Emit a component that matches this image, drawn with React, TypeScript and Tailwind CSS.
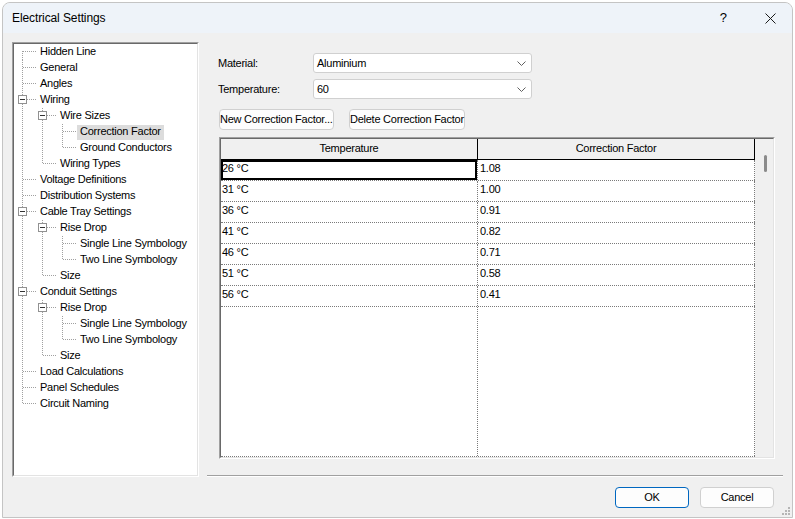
import type { ReactNode } from 'react'

type Node = { t: string; c?: Node[]; sel?: boolean }
type Row = { t: string; guides: boolean[]; first: boolean; last: boolean; kids: boolean; sel?: boolean }

const riseDrop = (): Node[] => [
  { t: 'Rise Drop', c: [{ t: 'Single Line Symbology' }, { t: 'Two Line Symbology' }] },
  { t: 'Size' },
]

const tree: Node[] = [
  { t: 'Hidden Line' },
  { t: 'General' },
  { t: 'Angles' },
  {
    t: 'Wiring',
    c: [
      { t: 'Wire Sizes', c: [{ t: 'Correction Factor', sel: true }, { t: 'Ground Conductors' }] },
      { t: 'Wiring Types' },
    ],
  },
  { t: 'Voltage Definitions' },
  { t: 'Distribution Systems' },
  { t: 'Cable Tray Settings', c: riseDrop() },
  { t: 'Conduit Settings', c: riseDrop() },
  { t: 'Load Calculations' },
  { t: 'Panel Schedules' },
  { t: 'Circuit Naming' },
]

function flatten(nodes: Node[], guides: boolean[] = [], out: Row[] = []) {
  nodes.forEach((n, i) => {
    const last = i === nodes.length - 1
    out.push({ t: n.t, guides, first: guides.length === 0 && i === 0, last, kids: !!n.c, sel: n.sel })
    if (n.c) flatten(n.c, [...guides, !last], out)
  })
  return out
}

const rows = flatten(tree)

const factors = [
  ['26 °C', '1.08'],
  ['31 °C', '1.00'],
  ['36 °C', '0.91'],
  ['41 °C', '0.82'],
  ['46 °C', '0.71'],
  ['51 °C', '0.58'],
  ['56 °C', '0.41'],
]

const dot = '#a0a0a0'

function Guide({ on }: { on: boolean }) {
  return (
    <svg width="20" height="16" shapeRendering="crispEdges" className="shrink-0">
      {on && <line x1="8.5" y1="0" x2="8.5" y2="16" stroke={dot} strokeDasharray="1 1" />}
    </svg>
  )
}

function Connector({ row }: { row: Row }) {
  return (
    <svg width="23" height="16" shapeRendering="crispEdges" className="shrink-0">
      <line
        x1="8.5"
        y1={row.first ? 7 : 0}
        x2="8.5"
        y2={row.last ? 8 : 16}
        stroke={dot}
        strokeDasharray="1 1"
      />
      <line x1={row.kids ? 13 : 9} y1="7.5" x2="23" y2="7.5" stroke={dot} strokeDasharray="1 1" />
      {row.kids && (
        <>
          <rect x="4.5" y="3.5" width="8" height="8" fill="#fff" stroke="#919191" />
          <line x1="6" y1="7.5" x2="11" y2="7.5" stroke="#333" />
        </>
      )}
    </svg>
  )
}

function Sunken({ className, children }: { className: string; children: ReactNode }) {
  return (
    <div
      className={`border border-t-[#a0a0a0] border-l-[#a0a0a0] border-r-white border-b-white ${className}`}
    >
      <div className="flex h-full w-full border border-t-[#696969] border-l-[#696969] border-r-[#e3e3e3] border-b-[#e3e3e3] bg-white">
        {children}
      </div>
    </div>
  )
}

function Chevron() {
  return (
    <svg width="9" height="5" className="ml-auto mr-[5px]">
      <path d="M0.5 0.5 L4.5 4.5 L8.5 0.5" fill="none" stroke="#606060" />
    </svg>
  )
}

function Combo({ label, value }: { label: string; value: string }) {
  return (
    <div className="flex items-center">
      <span className="w-[95px]">{label}</span>
      <div className="flex h-[20px] w-[219px] items-center rounded-[3px] border border-[#d0d0d0] bg-white pl-[3px]">
        {value}
        <Chevron />
      </div>
    </div>
  )
}

function Button({ children, primary }: { children: ReactNode; primary?: boolean }) {
  return (
    <button
      type="button"
      className={`flex h-[21px] items-center justify-center rounded-[4px] bg-[#fdfdfd] ${
        primary ? 'w-[74px] border border-[#0067c0]' : 'border border-[#d0d0d0]'
      }`}
    >
      {children}
    </button>
  )
}

export default function App() {
  return (
    <div className="h-[519px] w-[795px] bg-white pl-[2px] pt-[2px] font-['Liberation_Sans',Arial,sans-serif] text-[11px] tracking-[-0.25px] text-black">
      <div className="relative flex h-[516px] w-[791px] flex-col overflow-hidden rounded-t-[8px] border border-[#c4c4c4] bg-[#f0f0f0]">
        {/* title bar */}
        <div className="flex h-[30px] shrink-0 items-center bg-[#eef3f9] pl-[9px] font-['Segoe_UI','Liberation_Sans',sans-serif] text-[12px] tracking-[-0.1px]">
          <span>Electrical Settings</span>
          <span className="ml-auto text-[13px]">?</span>
          <svg width="11" height="11" className="ml-[38px] mr-[16px]">
            <path d="M0.5 0.5 L10.5 10.5 M10.5 0.5 L0.5 10.5" stroke="#1a1a1a" />
          </svg>
        </div>

        <div className="flex flex-1 flex-col px-[9px] pt-[9px]">
          <div className="flex h-[435px] gap-[8px]">
            <Sunken className="h-full w-[187px]">
              <div className="flex flex-col">
                {rows.map((r, i) => (
                  <div key={i} className="flex h-[16px] items-center">
                    {r.guides.map((g, j) => (
                      <Guide key={j} on={g} />
                    ))}
                    <Connector row={r} />
                    <span
                      className={`flex h-[15px] items-center whitespace-nowrap px-[3px] pb-[2px] leading-[13px] ${
                        r.sel ? 'bg-[#dcdcdc]' : ''
                      }`}
                    >
                      {r.t}
                    </span>
                  </div>
                ))}
              </div>
            </Sunken>

            <div className="flex flex-1 flex-col pl-[11px] pt-[11px]">
              <Combo label="Material:" value="Aluminium" />
              <div className="mt-[6px]">
                <Combo label="Temperature:" value="60" />
              </div>

              <div className="ml-px mt-[10px] flex gap-[12px]">
                <div className="w-[118px]">
                  <Button>
                    <span className="w-full">New Correction Factor...</span>
                  </Button>
                </div>
                <div className="w-[118px]">
                  <Button>
                    <span className="w-full">Delete Correction Factor</span>
                  </Button>
                </div>
              </div>

              <Sunken className="ml-px mt-[7px] h-[322px] w-[556px]">
                <div className="flex w-[534px] flex-col">
                  <div className="flex h-[21px] shrink-0 border-b border-black bg-[#f0f0f0] leading-[18px]">
                    <div className="w-[257px] border-r border-black text-center">Temperature</div>
                    <div className="w-[277px] border-r border-black text-center">Correction Factor</div>
                  </div>
                  {factors.map(([t, f], i) => (
                    <div
                      key={t}
                      className="flex h-[21px] shrink-0 border-b border-dotted border-[#7a7a7a] leading-[16px]"
                    >
                      <div
                        className={`w-[257px] border-r border-dotted border-[#7a7a7a] pl-[1px] ${
                          i === 0 ? 'shadow-[inset_0_0_0_2px_#000]' : ''
                        }`}
                      >
                        {t}
                      </div>
                      <div className="w-[277px] border-r border-dotted border-[#7a7a7a] pl-[2px]">{f}</div>
                    </div>
                  ))}
                  <div className="flex flex-1 border-b border-dotted border-[#7a7a7a]">
                    <div className="w-[257px] border-r border-dotted border-[#7a7a7a]" />
                    <div className="w-[277px] border-r border-dotted border-[#7a7a7a]" />
                  </div>
                </div>
                <div className="flex w-[18px] flex-col bg-[#f0f0f0] pl-[9px] pt-[16px]">
                  <div className="h-[17px] w-[3px] rounded-full bg-[#8b8b8b]" />
                </div>
              </Sunken>

              <div className="-ml-[11px] mt-auto h-px bg-[#a0a0a0]" />
              <div className="-ml-[11px] h-px bg-white" />
            </div>
          </div>

          <div className="mt-[10px] flex justify-end gap-[11px] pr-[9px]">
            <Button primary>OK</Button>
            <Button>
              <span className="w-[72px]">Cancel</span>
            </Button>
          </div>
        </div>

        <svg width="9" height="9" className="absolute bottom-[1px] right-[1px]">
          {[
            [6, 0],
            [3, 3],
            [6, 3],
            [0, 6],
            [3, 6],
            [6, 6],
          ].map(([x, y]) => (
            <rect key={`${x}-${y}`} x={x} y={y} width="2" height="2" fill="#b5b5b5" />
          ))}
        </svg>
      </div>
    </div>
  )
}
